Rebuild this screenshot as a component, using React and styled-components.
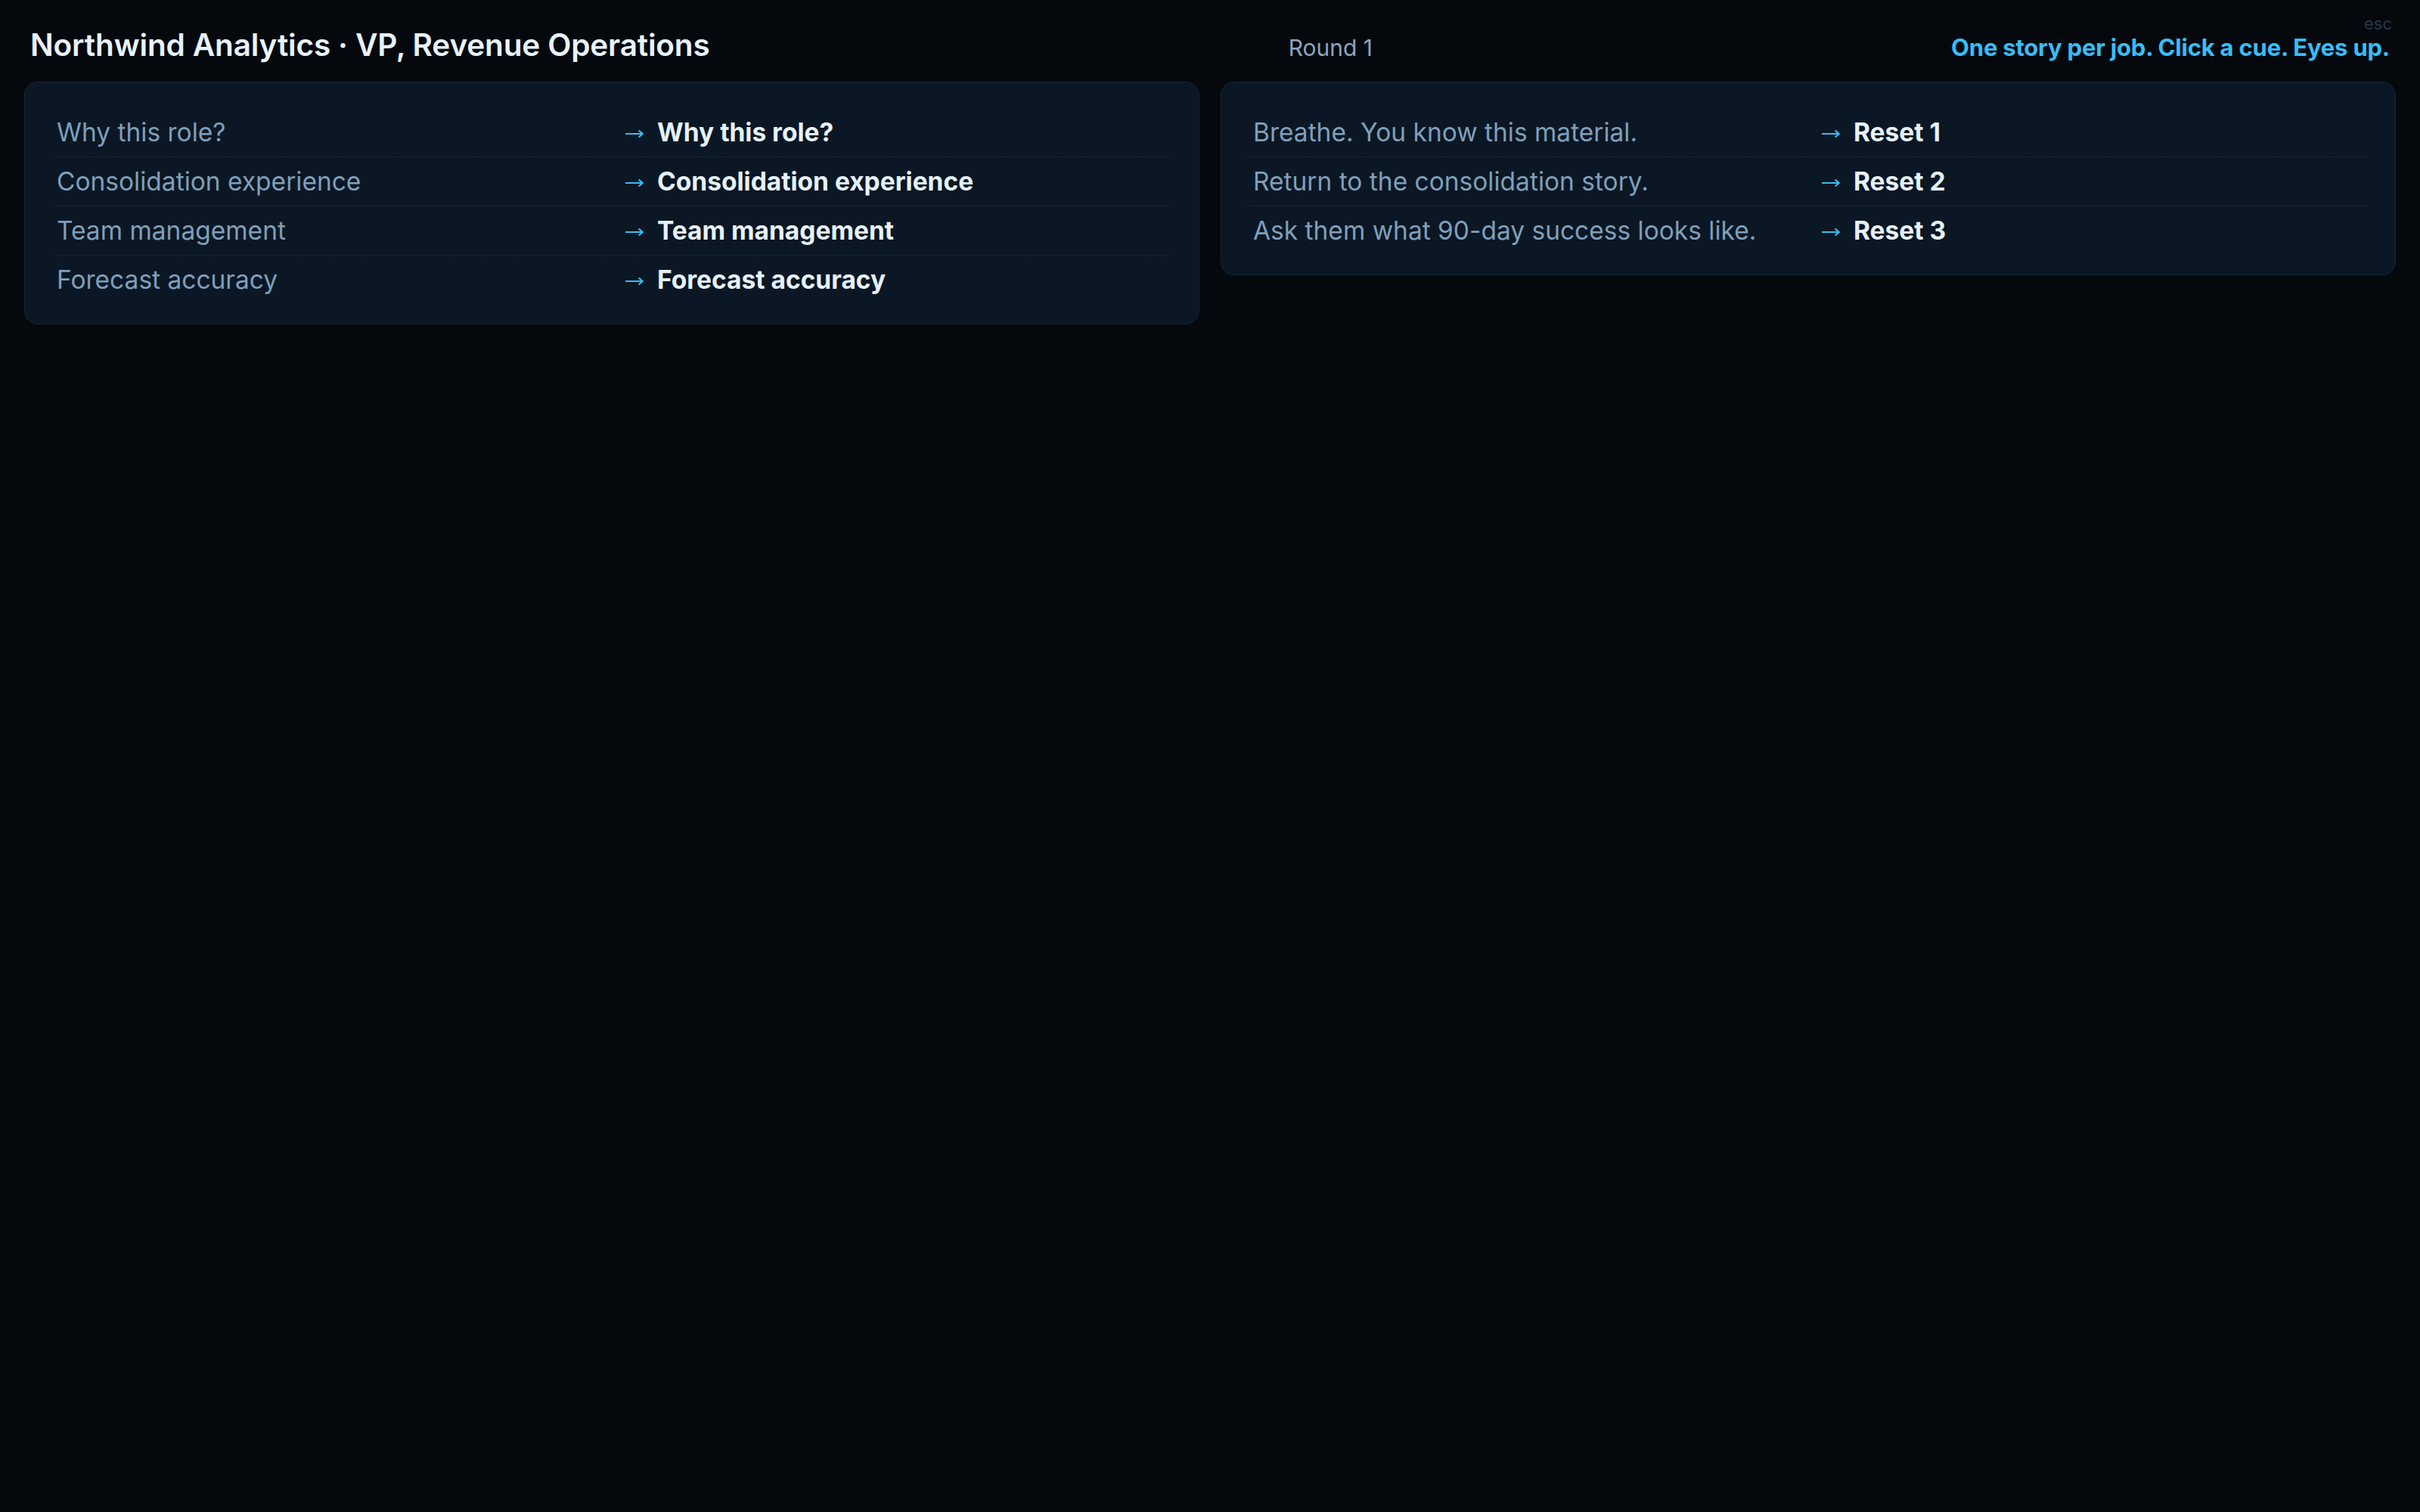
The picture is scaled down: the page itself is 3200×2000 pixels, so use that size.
import React from "react";
import styled, { createGlobalStyle } from "styled-components";

const Global = createGlobalStyle`
  html, body {
    margin: 0;
    padding: 0;
    background: #05090e;
  }
  body {
    font-family: Inter, "Noto Sans", "Liberation Sans", sans-serif;
    color: #e6f0fa;
    min-height: 2000px;
  }
`;

const Page = styled.div`
  position: relative;
  min-height: 2000px;
  box-sizing: border-box;
  padding: 36px 32px;
  background: #05090e;
`;

const Esc = styled.div`
  position: absolute;
  top: 18px;
  right: 37px;
  font-size: 22px;
  color: #26364a;
`;

const Header = styled.header`
  display: flex;
  align-items: baseline;
  justify-content: space-between;
  padding: 0 8px;
  margin-bottom: 24px;
`;

const Title = styled.h1`
  margin: 0;
  font-size: 40.5px;
  line-height: 48px;
  font-weight: 600;
  color: #e8f2fb;
  letter-spacing: -0.15px;
`;

const RoundLabel = styled.div`
  font-size: 30px;
  color: #8ba6bd;
`;

const Tagline = styled.div`
  font-size: 31px;
  font-weight: 700;
  color: #38bdf8;
  letter-spacing: -0.2px;
`;

const Columns = styled.div`
  display: grid;
  grid-template-columns: 1fr 1fr;
  gap: 28px;
  align-items: start;
`;

const Card = styled.section`
  background: #0b1724;
  border: 1px solid #15263a;
  border-radius: 18px;
  padding: 34px 30px 26px;
`;

const Row = styled.div`
  display: grid;
  grid-template-columns: 1fr 1fr;
  column-gap: 36px;
  align-items: center;
  padding: 12px 12px;
  border-radius: 10px;
  border-bottom: ${(p) => (p.$last ? "none" : "1px dotted #1e3044")};
  font-size: 33.5px;
  line-height: 40px;
`;

const Label = styled.span`
  color: #7f9fba;
  font-weight: 400;
`;

const Cue = styled.span`
  display: flex;
  align-items: center;
  gap: 18px;
  color: #e6f1fb;
  font-weight: 700;
`;

const ArrowIcon = styled.svg`
  flex: none;
  width: 24px;
  height: 12px;
  margin-top: 3px;
`;

function Arrow() {
  return (
    <ArrowIcon viewBox="0 0 24 12" aria-hidden="true">
      <path
        d="M0 6 H22.6 M17.6 1.4 L22.6 6 L17.6 10.6"
        fill="none"
        stroke="#38bdf8"
        strokeWidth="2.1"
        strokeLinecap="butt"
        strokeLinejoin="miter"
      />
    </ArrowIcon>
  );
}

const questions = [
  ["Why this role?", "Why this role?"],
  ["Consolidation experience", "Consolidation experience"],
  ["Team management", "Team management"],
  ["Forecast accuracy", "Forecast accuracy"],
];

const resets = [
  ["Breathe. You know this material.", "Reset 1"],
  ["Return to the consolidation story.", "Reset 2"],
  ["Ask them what 90-day success looks like.", "Reset 3"],
];

function CueCard({ items }) {
  return (
    <Card>
      {items.map(([label, cue], i) => (
        <Row key={i} $last={i === items.length - 1}>
          <Label>{label}</Label>
          <Cue>
            <Arrow />
            {cue}
          </Cue>
        </Row>
      ))}
    </Card>
  );
}

export default function App() {
  return (
    <>
      <Global />
      <Page>
        <Esc>esc</Esc>
        <Header>
          <Title>Northwind Analytics · VP, Revenue Operations</Title>
          <RoundLabel>Round 1</RoundLabel>
          <Tagline>One story per job. Click a cue. Eyes up.</Tagline>
        </Header>
        <Columns>
          <CueCard items={questions} />
          <CueCard items={resets} />
        </Columns>
      </Page>
    </>
  );
}
